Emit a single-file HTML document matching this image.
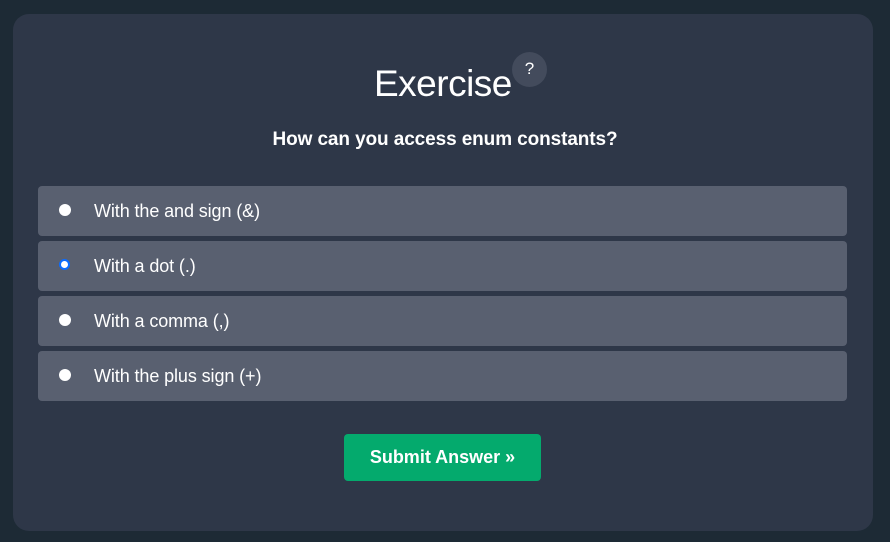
<!DOCTYPE html>
<html><head><style>
body{margin:0;width:890px;height:542px;background:#1d2a35;font-family:"Liberation Sans",sans-serif;overflow:hidden}
.card{position:absolute;left:13px;top:14px;width:860px;height:517px;background:#2e3748;border-radius:16px}
h1{position:absolute;left:374px;top:62px;margin:0;font-weight:normal;color:#fff;font-size:37px;line-height:44px;letter-spacing:-0.5px}
.q{position:absolute;left:512px;top:52px;width:35px;height:35px;border-radius:50%;background:#434b5c;color:#fff;font-size:17px;text-align:center;line-height:33px}
.qs{position:absolute;left:0;width:890px;top:129px;text-align:center;color:#fff;font-weight:bold;font-size:19px;letter-spacing:-0.1px}
.opt{position:absolute;left:38px;width:809px;height:50px;background:#596070;border-radius:4px;color:#fff;font-size:18px;line-height:50px}
.opt span{position:absolute;left:56px;letter-spacing:-0.1px}
.r{position:absolute;left:21px;top:18px;width:12px;height:12px;border-radius:50%;background:#fff}
.r.s{width:7px;height:7px;border:2.5px solid #0b6cff;top:18px;background:#fff}
.btn{position:absolute;left:344px;top:434px;width:197px;height:47px;background:#04aa6d;border-radius:4px;color:#fff;font-weight:bold;font-size:18px;text-align:center;line-height:47px}
</style></head><body>
<div class="card"></div>
<h1>Exercise</h1><div class="q">?</div>
<div class="qs">How can you access enum constants?</div>
<div class="opt" style="top:186px"><div class="r"></div><span>With the and sign (&amp;)</span></div>
<div class="opt" style="top:241px"><div class="r s"></div><span>With a dot (.)</span></div>
<div class="opt" style="top:296px"><div class="r"></div><span>With a comma (,)</span></div>
<div class="opt" style="top:351px"><div class="r"></div><span>With the plus sign (+)</span></div>
<div class="btn">Submit Answer »</div>
</body></html>
